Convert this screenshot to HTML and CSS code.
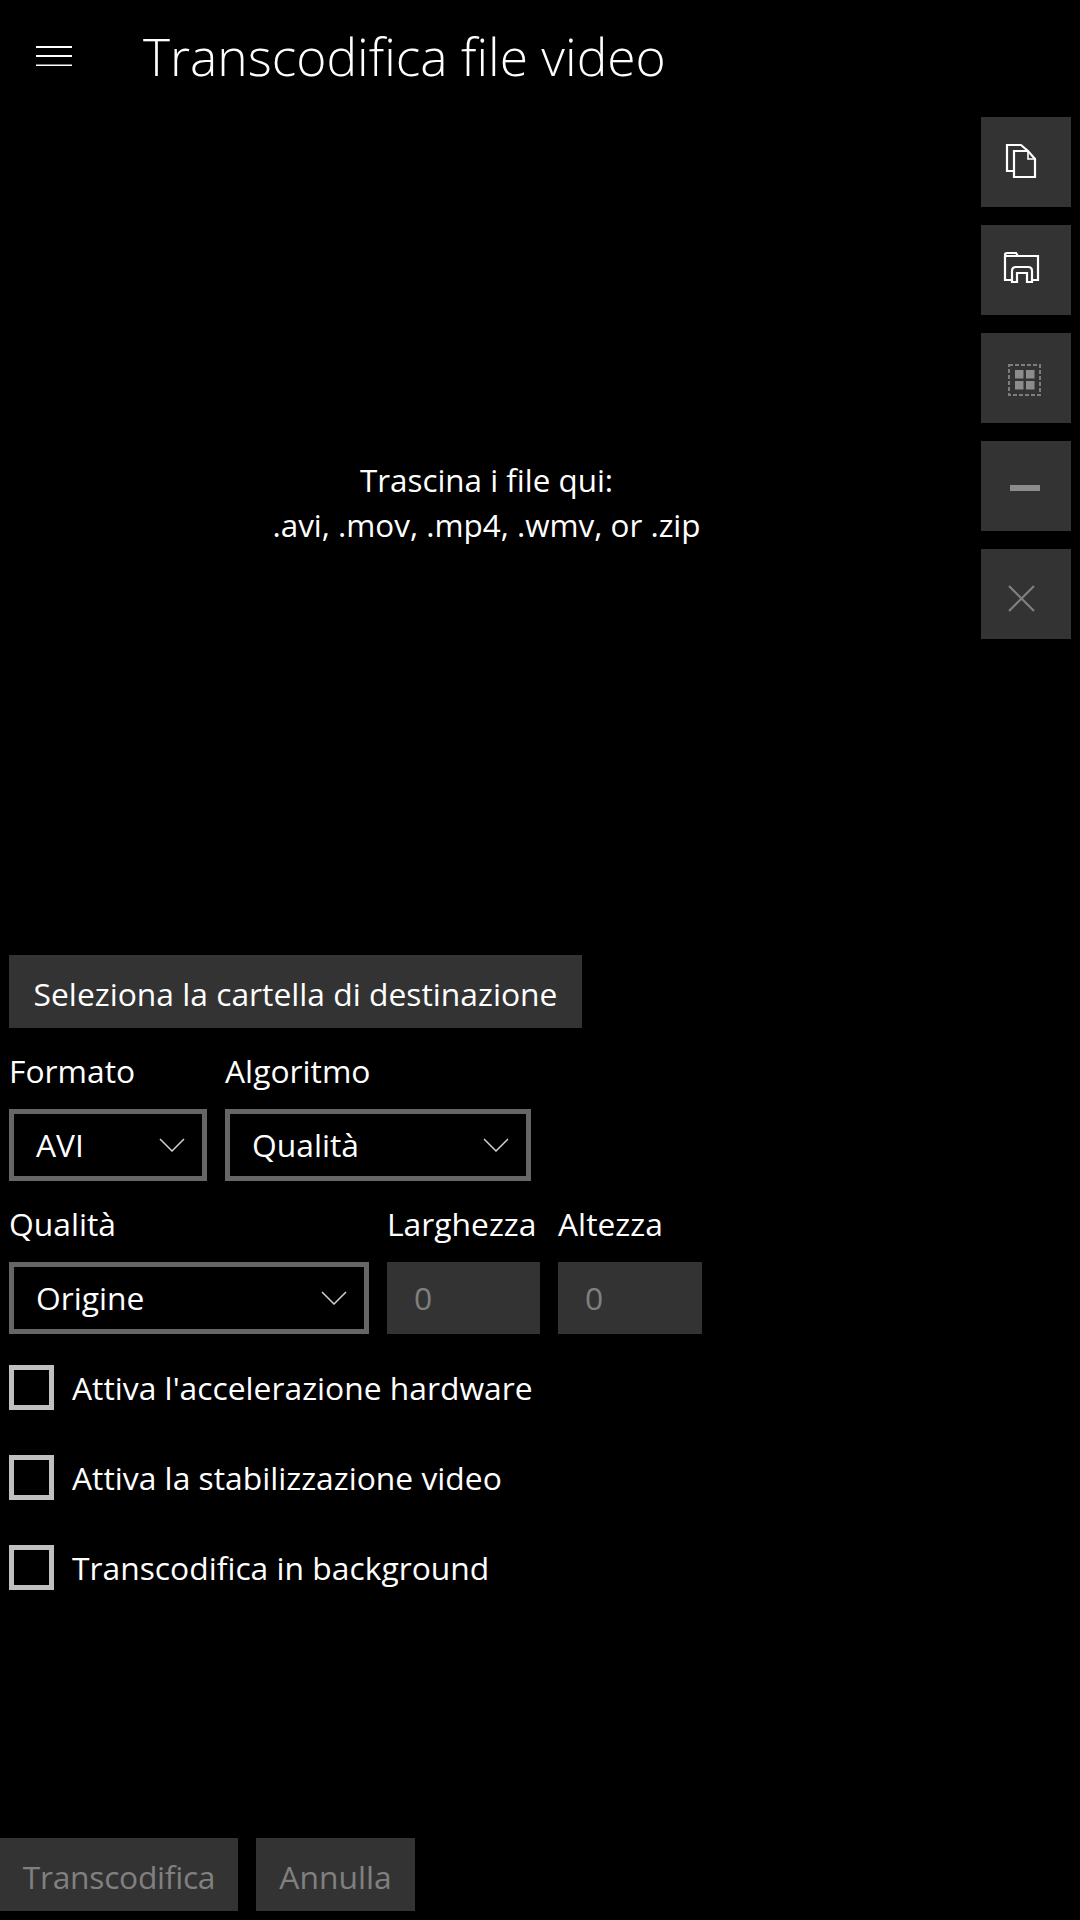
FILE: index.html
```html
<!DOCTYPE html>
<html lang="it">
<head>
    <meta charset="UTF-8">
    <title>Transcodifica file video</title>
    <link rel="stylesheet" href="styles.css">
</head>
<body>
    <div class="page">
        <header class="header">
            <svg class="hamburger" width="36" height="20" viewBox="0 0 36 20">
                <path d="M0 1h36M0 10h36M0 19.500h36" stroke="#fff" stroke-width="2" fill="none"/>
            </svg>
            <h1 class="title">Transcodifica file video</h1>
        </header>

        <div class="workspace">
            <div class="dropzone">
                <p>Trascina i file qui:</p>
                <p>.avi, .mov, .mp4, .wmv, or .zip</p>
            </div>
            <div class="toolbar">
                <button class="tool">
                    <svg width="90" height="90" viewBox="0 0 90 90" fill="none" stroke="#fff" stroke-width="2.200">
                        <path d="M33 54h-7V28h14l7 6"/>
                        <path d="M33 34h14l7 8v18H33z"/>
                        <path d="M47 34v8h7" stroke-width="1.600"/>
                    </svg>
                </button>
                <button class="tool">
                    <svg width="90" height="90" viewBox="0 0 90 90" fill="none" stroke="#fff" stroke-width="2.200">
                        <path d="M24 31v24h6M51 55h6V31H37l-2-3H26q-2 0-2 1.500t2 1.500h11"/>
                        <path d="M31 57V46q0-4 4-4h12q4 0 4 4v11h-5v-9H36v9z"/>
                    </svg>
                </button>
                <button class="tool">
                    <svg width="90" height="90" viewBox="0 0 90 90">
                        <rect x="28" y="32" width="31" height="30" fill="none" stroke="#7d7d7d" stroke-width="2" stroke-dasharray="4 2"/>
                        <rect x="34" y="37" width="8.500" height="8.500" fill="#8c8c8c"/>
                        <rect x="45" y="37" width="8.500" height="8.500" fill="#8c8c8c"/>
                        <rect x="34" y="48" width="8.500" height="8.500" fill="#8c8c8c"/>
                        <rect x="45" y="48" width="8.500" height="8.500" fill="#8c8c8c"/>
                    </svg>
                </button>
                <button class="tool">
                    <svg width="90" height="90" viewBox="0 0 90 90">
                        <rect x="29" y="44" width="30" height="6" fill="#8c8c8c"/>
                    </svg>
                </button>
                <button class="tool">
                    <svg width="90" height="90" viewBox="0 0 90 90">
                        <path d="M28 37l25 25M53 37L28 62" stroke="#808080" stroke-width="2.200" fill="none"/>
                    </svg>
                </button>
            </div>
        </div>

        <div class="options">
            <button class="btn btn-folder">Seleziona la cartella di destinazione</button>

            <div class="row">
                <div class="field field-format">
                    <div class="label">Formato</div>
                    <div class="select">
                        <span>AVI</span>
                        <svg width="26" height="14" viewBox="0 0 26 14"><path d="M1 1l12 12L25 1" stroke="#d0d0d0" stroke-width="1.500" fill="none"/></svg>
                    </div>
                </div>
                <div class="field field-algo">
                    <div class="label">Algoritmo</div>
                    <div class="select">
                        <span>Qualità</span>
                        <svg width="26" height="14" viewBox="0 0 26 14"><path d="M1 1l12 12L25 1" stroke="#d0d0d0" stroke-width="1.500" fill="none"/></svg>
                    </div>
                </div>
            </div>

            <div class="row">
                <div class="field field-quality">
                    <div class="label">Qualità</div>
                    <div class="select">
                        <span>Origine</span>
                        <svg width="26" height="14" viewBox="0 0 26 14"><path d="M1 1l12 12L25 1" stroke="#d0d0d0" stroke-width="1.500" fill="none"/></svg>
                    </div>
                </div>
                <div class="field field-width">
                    <div class="label">Larghezza</div>
                    <div class="input">0</div>
                </div>
                <div class="field field-height">
                    <div class="label">Altezza</div>
                    <div class="input">0</div>
                </div>
            </div>

            <div class="checks">
                <div class="check"><span class="box"></span>Attiva l'accelerazione hardware</div>
                <div class="check"><span class="box"></span>Attiva la stabilizzazione video</div>
                <div class="check"><span class="box"></span>Transcodifica in background</div>
            </div>
        </div>

        <footer class="footer">
            <button class="btn btn-off btn-start">Transcodifica</button>
            <button class="btn btn-off btn-cancel">Annulla</button>
        </footer>
    </div>
</body>
</html>
```

FILE: styles.css
```css
* {
    box-sizing: border-box;
}
body {
    margin: 0;
    background-color: #000;
    color: #fff;
    font-family: "Open Sans", "Noto Sans", sans-serif;
    font-size: 31.800px;
}
p {
    margin: 0;
}
button {
    border: none;
    padding: 0;
    font-family: inherit;
    font-size: inherit;
    color: inherit;
    background-color: #333;
}
.page {
    display: flex;
    flex-direction: column;
    height: 1920px;
}

/* top bar */
.header {
    display: flex;
    align-items: center;
    height: 117px;
    padding-left: 36px;
    padding-bottom: 6px;
}
.hamburger {
    margin-right: 71px;
}
.title {
    margin: 0;
    font-size: 51.500px;
    font-weight: 300;
}

/* drop area + side buttons */
.workspace {
    display: flex;
    height: 772px;
}
.dropzone {
    flex: 1;
    display: flex;
    flex-direction: column;
    align-items: center;
    justify-content: center;
    padding: 0 8px 2px 0;
    font-size: 31.400px;
    line-height: 45px;
}
.toolbar {
    display: flex;
    flex-direction: column;
    gap: 18px;
    margin-right: 9px;
}
.tool {
    width: 90px;
    height: 90px;
}
.tool svg {
    display: block;
}

/* form */
.options {
    padding: 66px 9px 0;
}
.btn {
    height: 73px;
    padding-top: 3px;
}
.btn-folder {
    display: block;
    width: 573px;
}
.row {
    display: flex;
    gap: 18px;
}
.label {
    height: 81px;
    padding-top: 20px;
    line-height: 45px;
}
.field-format {
    width: 198px;
}
.field-algo {
    width: 306px;
}
.field-quality {
    width: 360px;
}
.field-width {
    width: 153px;
}
.field-height {
    width: 144px;
}
.select {
    display: flex;
    align-items: center;
    justify-content: space-between;
    height: 72px;
    padding: 0 17px 0 22px;
    border: 5px solid #666;
}
.select span {
    margin-bottom: 1px;
}
.input {
    display: flex;
    align-items: center;
    height: 72px;
    padding: 0 0 1px 27px;
    background-color: #333;
    color: #808080;
}
.checks {
    display: flex;
    flex-direction: column;
    gap: 45px;
    margin-top: 31px;
}
.check {
    display: flex;
    align-items: center;
    gap: 18px;
    height: 45px;
}
.box {
    width: 45px;
    height: 45px;
    border: 5px solid #c0c0c0;
}

/* bottom buttons */
.footer {
    display: flex;
    gap: 18px;
    margin-top: auto;
    padding-bottom: 9px;
}
.btn-off {
    color: #808080;
}
.btn-start {
    width: 238px;
    letter-spacing: -0.300px;
}
.btn-cancel {
    width: 159px;
}
```
